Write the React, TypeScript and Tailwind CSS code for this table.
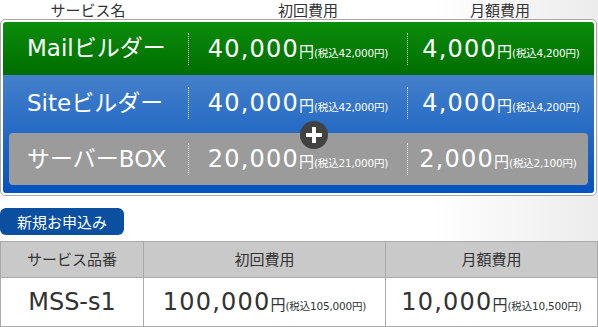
const FONT = 'font-["DejaVu_Sans","Noto_Sans_CJK_JP",sans-serif]';

type Price = { main: string; tax: string };

interface PlanRow {
  name: string;
  initial: Price;
  monthly: Price;
}

const plans: PlanRow[] = [
  { name: 'Mailビルダー', initial: { main: '40,000', tax: '42,000' }, monthly: { main: '4,000', tax: '4,200' } },
  { name: 'Siteビルダー', initial: { main: '40,000', tax: '42,000' }, monthly: { main: '4,000', tax: '4,200' } },
  { name: 'サーバーBOX', initial: { main: '20,000', tax: '21,000' }, monthly: { main: '2,000', tax: '2,100' } },
];

/** Big price with small tax-included note, baseline aligned. */
function PriceText({ price, dark }: { price: Price; dark?: boolean }) {
  return (
    <span className={`flex items-baseline whitespace-nowrap ${dark ? 'text-[#333]' : 'text-white'}`}>
      <span className="text-[24px] leading-none tracking-[1.2px]">{price.main}</span>
      <span className="text-[15px] leading-none">円</span>
      <span className="text-[10.5px] leading-none tracking-[-0.2px]">(税込{price.tax}円)</span>
    </span>
  );
}

/** Row inside the coloured plan box: label + two price columns split by dotted rules. */
function PlanLine({ plan, labelPad, firstCol }: { plan: PlanRow; labelPad: string; firstCol: string }) {
  return (
    <div className="flex items-center h-full">
      <div className={`${firstCol} ${labelPad} text-[23px] leading-none text-white whitespace-nowrap`}>{plan.name}</div>
      <div className="w-[219px] flex items-center h-full">
        <div className="h-[32px] border-l border-dotted border-white/90" />
        <div className="flex-1 flex justify-center">
          <PriceText price={plan.initial} />
        </div>
      </div>
      <div className="flex-1 flex items-center h-full">
        <div className="h-[32px] border-l border-dotted border-white/90" />
        <div className="flex-1 flex justify-center">
          <PriceText price={plan.monthly} />
        </div>
      </div>
    </div>
  );
}

export default function App() {
  return (
    <div className={`w-[598px] h-[327px] bg-white ${FONT}`}>
      <div className="h-[241px] bg-[linear-gradient(to_right,#ffffff_72%,#ececec_100%)]">
        {/* Column captions */}
        <div className="h-[19px] flex items-center text-[15px] leading-none text-[#333] font-['Noto_Sans_CJK_JP',sans-serif]">
          <div className="w-[176px] text-center">サービス名</div>
          <div className="w-[264px] text-center">初回費用</div>
          <div className="w-[120px] text-center">月額費用</div>
        </div>

        {/* Plan box */}
        <div className="w-[597px] border border-[#a9a9a9] rounded-[5px] bg-white p-[2px]">
          <div className="rounded-[3px] overflow-hidden">
            <div className="h-[53px] bg-[linear-gradient(to_bottom,#0b8d0b,#006d00)]">
              <PlanLine plan={plans[0]} labelPad="pl-[24px]" firstCol="w-[185px]" />
            </div>
            <div className="relative bg-[linear-gradient(to_bottom,#4580ca,#0253c0)] pb-[8px]">
              <div className="h-[56px]">
                <PlanLine plan={plans[1]} labelPad="pl-[24px]" firstCol="w-[185px]" />
              </div>
              <div className="h-[52px] mt-[2px] mx-[6px] rounded-[4px] bg-[#9b9b9b]">
                <PlanLine plan={plans[2]} labelPad="pl-[18px]" firstCol="w-[179px]" />
              </div>
              {/* plus badge */}
              <div className="absolute left-[297px] top-[46px] w-[28px] h-[28px] rounded-full bg-[#424242] flex items-center justify-center">
                <div className="relative w-[16px] h-[16px]">
                  <div className="absolute left-0 top-[6px] w-[16px] h-[4px] bg-white" />
                  <div className="absolute left-[6px] top-0 w-[4px] h-[16px] bg-white" />
                </div>
              </div>
            </div>
          </div>
        </div>

        {/* Apply badge */}
        <div className="mt-[12px] w-[124px] h-[27px] rounded-[6px] bg-[#0b4fa1] flex items-center justify-center text-[15px] leading-none text-white font-['Noto_Sans_CJK_JP',sans-serif]">
          新規お申込み
        </div>
      </div>

      {/* Order table */}
      <table className="w-[598px] border-collapse text-[#333]">
        <thead>
          <tr className="h-[36px] bg-[#c9c9c9] text-[15px] font-['Noto_Sans_CJK_JP',sans-serif]">
            <th className="w-[143px] border border-[#a9a9a9] font-normal">サービス品番</th>
            <th className="w-[242px] border border-[#a9a9a9] font-normal">初回費用</th>
            <th className="border border-[#a9a9a9] font-normal">月額費用</th>
          </tr>
        </thead>
        <tbody>
          <tr className="h-[49px] bg-white">
            <td className="border border-[#a9a9a9] text-center text-[24px] leading-none">MSS-s1</td>
            <td className="border border-[#a9a9a9]">
              <div className="flex justify-center">
                <PriceText price={{ main: '100,000', tax: '105,000' }} dark />
              </div>
            </td>
            <td className="border border-[#a9a9a9]">
              <div className="flex justify-center">
                <PriceText price={{ main: '10,000', tax: '10,500' }} dark />
              </div>
            </td>
          </tr>
        </tbody>
      </table>
    </div>
  );
}
